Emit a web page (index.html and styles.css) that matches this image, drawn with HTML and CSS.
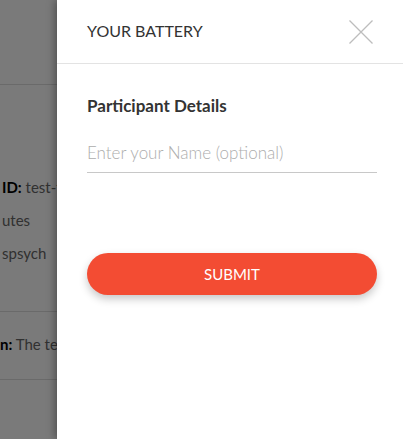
FILE: index.html
```html
<!DOCTYPE html>
<html>
<head>
<meta charset="utf-8">
<link rel="stylesheet" href="styles.css">
</head>
<body>
<div class="page">
  <div class="bg-row bg-top"></div>
  <div class="bg-row bg-info">
    <p class="bg-line"><b>ID:</b> test-task</p>
    <p class="bg-line">utes</p>
    <p class="bg-line">spsych</p>
  </div>
  <div class="bg-row bg-desc">
    <p class="bg-line"><b>n:</b> The text</p>
  </div>
  <div class="bg-row bg-bottom"></div>
</div>
<div class="overlay"></div>
<aside class="drawer">
  <header class="drawer-head">
    <h1 class="drawer-title">YOUR BATTERY</h1>
    <button class="close" aria-label="Close">
      <svg width="24" height="24" viewBox="0 0 24 24"><path d="M0.5 0.5L23.5 23.5M23.5 0.5L0.5 23.5" stroke="#bdbdbd" stroke-width="1.3" fill="none"/></svg>
    </button>
  </header>
  <div class="drawer-body">
    <h2 class="section-title">Participant Details</h2>
    <input class="name-input" type="text" placeholder="Enter your Name (optional)">
    <button class="submit">SUBMIT</button>
  </div>
</aside>
</body>
</html>
```
FILE: styles.css
```css
* { box-sizing: border-box; }
html, body { margin: 0; padding: 0; height: 100%; }
body {
  font-family: Lato, "Open Sans", sans-serif;
  background: #fff;
  overflow: hidden;
  position: relative;
  width: 403px;
  height: 439px;
}
.page {
  display: flex;
  flex-direction: column;
}
.bg-row { border-bottom: 1px solid #ddd; }
.bg-top { height: 85px; }
.bg-info { padding: 92px 0 48px 2px; display: flex; flex-direction: column; gap: 13px; }
.bg-desc { padding: 22px 0 0 0; height: 68px; }
.bg-bottom { height: 60px; border-bottom: none; }
.bg-line { margin: 0; font-size: 15px; line-height: 20px; color: #666; white-space: nowrap; }
.bg-line b { color: #000; }
.overlay {
  position: absolute;
  inset: 0;
  background: rgba(0,0,0,0.52);
}
.drawer {
  position: absolute;
  top: 0;
  left: 57px;
  right: 0;
  bottom: 0;
  background: #fff;
  box-shadow: -2px 0 8px rgba(0,0,0,0.35);
  display: flex;
  flex-direction: column;
}
.drawer-head {
  height: 64px;
  border-bottom: 1px solid #e3e3e3;
  display: flex;
  align-items: center;
  justify-content: space-between;
  padding: 0 30px;
}
.drawer-title {
  margin: 0;
  font-size: 16px;
  font-weight: 400;
  color: #333;
  margin-top: -2px;
}
.close {
  border: none;
  background: none;
  padding: 0;
  width: 24px;
  height: 24px;
}
.close svg { display: block; }
.drawer-body {
  padding: 31px 26px 0 30px;
  display: flex;
  flex-direction: column;
}
.section-title {
  margin: 0;
  font-size: 17px;
  font-weight: 700;
  color: #333;
  line-height: 22px;
}
.name-input {
  margin-top: 25px;
  border: none;
  border-bottom: 1px solid #c8c8c8;
  padding: 0 0 8px 0;
  font-family: inherit;
  font-size: 17px;
  font-weight: 300;
  line-height: 22px;
  outline: none;
  width: 100%;
}
.name-input::placeholder { color: #adadad; }
.submit {
  margin-top: 80px;
  height: 42px;
  border: none;
  border-radius: 21px;
  background: #f34c33;
  color: #fff;
  font-family: inherit;
  font-size: 15px;
  box-shadow: 0 4px 8px rgba(0,0,0,0.22);
}
```
